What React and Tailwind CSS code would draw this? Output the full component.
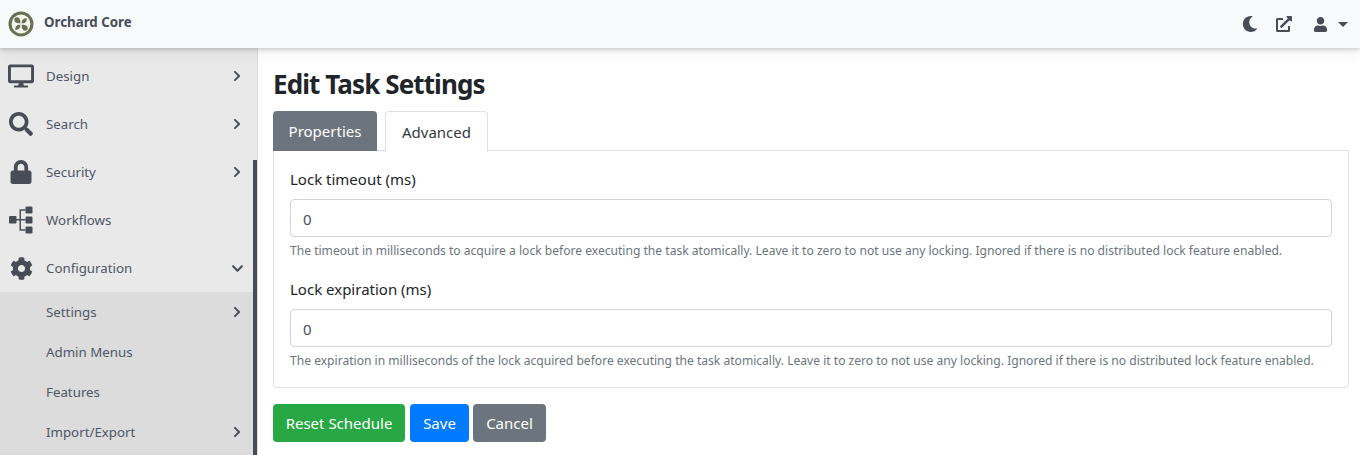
import React from "react";
import { FaDesktop, FaSearch, FaLock, FaCog, FaMoon, FaExternalLinkAlt, FaUser, FaChevronRight, FaChevronDown } from "react-icons/fa";

const Logo = () => (
  <svg width="26" height="26" viewBox="0 0 26 26" className="shrink-0">
    <circle cx="13" cy="13" r="12.5" fill="#6b6f53" />
    <circle cx="13" cy="13" r="9.400" fill="#f4f5ef" />
    <path d="M12.300 12.300C9 12.600 6.300 11.500 6.300 8.800C6.300 7.200 7.200 6.300 8.800 6.300C11.500 6.300 12.600 9 12.300 12.300z" fill="#6b6f53" />
    <path d="M13.700 12.300C13.400 9.500 14.800 7 18.800 7.200C19 11 16.500 12.700 13.700 12.300z" fill="#6b6f53" />
    <path d="M13.700 13.700C16.500 13.400 19.700 14.500 19.700 17.200C19.700 18.800 18.800 19.700 17.200 19.700C14.500 19.700 13.400 16.500 13.700 13.700z" fill="#6b6f53" />
    <path d="M12.300 13.700C12.600 16.500 11 19 7.200 18.800C7 15 9.500 13.300 12.300 13.700z" fill="#6b6f53" />
  </svg>
);

const WorkflowIcon = () => (
  <svg width="24" height="28" viewBox="0 0 24 28" fill="#474c57">
    <rect x="0" y="10" width="7.500" height="7.500" rx="1.200" />
    <rect x="16.500" y="0.500" width="7" height="7" rx="1.200" />
    <rect x="16.500" y="10.500" width="7" height="7" rx="1.200" />
    <rect x="16.500" y="20.500" width="7" height="7" rx="1.200" />
    <path d="M7 13h9.500v1.500H7zM10.500 3.200h6v1.500H12v18.600h4.500v1.500h-6z" />
  </svg>
);

const Row = ({ icon, label, chevron, sub }) => (
  <div className={`flex items-center text-[13.300px] text-[#4f5665] ${sub ? "h-10" : "h-12"}`}>
    <div className="w-[46px] flex justify-center pr-[4px] shrink-0">{icon}</div>
    <span className="flex-1 pt-[2px]">{label}</span>
    {chevron === "right" && <FaChevronRight className="mr-[10px] text-[12px] text-[#474c57]" />}
    {chevron === "down" && <FaChevronDown className="mr-[9px] text-[13px] text-[#474c57]" />}
  </div>
);

const Field = ({ label, help }) => (
  <div className="mb-[17px] last:mb-0">
    <label className="block text-[15px] leading-6 mb-[8px] text-[#212529]">{label}</label>
    <div className="h-[38px] border border-[#ced4da] rounded-[4px] px-3 pt-[2px] flex items-center text-[15px] text-[#495057] bg-white">0</div>
    <p className="text-[12.080px] leading-[18px] mt-[5px] text-[#6c757d] whitespace-nowrap">{help}</p>
  </div>
);

export default function App() {
  return (
    <div className="w-[1360px] h-[455px] overflow-hidden relative bg-white text-[#212529]" style={{ fontFamily: '"Noto Sans", "Open Sans", sans-serif' }}>
      <header className="h-12 bg-[#f8f9fa] flex items-center pl-2 pr-[12px] relative z-10 shadow-[0_2px_4px_rgba(0,0,0,0.15),0_4px_16px_rgba(0,0,0,0.07)]">
        <Logo />
        <span className="ml-[10px] pb-[2px] font-bold text-[13.300px] text-[#474c57]">Orchard Core</span>
        <div className="ml-auto flex items-center text-[#474c57]">
          <FaMoon className="text-[16px]" />
          <FaExternalLinkAlt className="text-[16px] ml-[18px]" />
          <FaUser className="text-[15px] ml-[21px]" />
          <span className="ml-[10px] w-0 h-0 border-x-[5px] border-x-transparent border-t-[5px] border-t-[#474c57]" />
        </div>
      </header>
      <div className="flex h-[407px]">
        <aside className="w-[258px] shrink-0 bg-[#e9e9e9] pt-1 relative overflow-hidden flex border-r border-[#dddddd]">
          <div className="flex-1 flex flex-col mr-[4px]">
            <Row icon={<FaDesktop className="text-[26px] text-[#474c57]" />} label="Design" chevron="right" />
            <Row icon={<FaSearch className="text-[24px] text-[#474c57]" />} label="Search" chevron="right" />
            <Row icon={<FaLock className="text-[24px] text-[#474c57]" />} label="Security" chevron="right" />
            <Row icon={<WorkflowIcon />} label="Workflows" />
            <Row icon={<FaCog className="text-[23px] text-[#474c57]" />} label="Configuration" chevron="down" />
            <div className="bg-[#dcdcdc] flex-1">
              <Row sub label="Settings" chevron="right" />
              <Row sub label="Admin Menus" />
              <Row sub label="Features" />
              <Row sub label="Import/Export" chevron="right" />
            </div>
          </div>
          <div className="absolute -right-px top-[112px] bottom-0 w-[5px] bg-[#474c57]" />
        </aside>
        <main className="flex-1 pl-[15px] pr-[11px] pt-[16px]">
          <h1 className="text-[26px] font-bold leading-[40px] tracking-[-0.9px] mb-[7px]">Edit Task Settings</h1>
          <div className="flex h-10 relative z-[1]">
            <div className="w-[104px] h-10 bg-[#6c757d] text-white rounded-t-[4px] flex items-center justify-center text-[15px]">Properties</div>
            <div className="ml-2 w-[103px] h-[41px] bg-white border border-[#dee2e6] border-b-0 rounded-t-[4px] flex items-center justify-center text-[15px] text-[#343a40]">Advanced</div>
          </div>
          <section className="-mt-px border border-[#dee2e6] rounded-b-[4px] pt-[16px] px-[16px] h-[238px]">
            <Field label="Lock timeout (ms)" help="The timeout in milliseconds to acquire a lock before executing the task atomically. Leave it to zero to not use any locking. Ignored if there is no distributed lock feature enabled." />
            <Field label="Lock expiration (ms)" help="The expiration in milliseconds of the lock acquired before executing the task atomically. Leave it to zero to not use any locking. Ignored if there is no distributed lock feature enabled." />
          </section>
          <div className="flex mt-4 text-white text-[15px]">
            <button className="h-[38px] w-[132px] rounded-[4px] bg-[#28a745]">Reset Schedule</button>
            <button className="h-[38px] w-[59px] ml-[5px] rounded-[4px] bg-[#007bff]">Save</button>
            <button className="h-[38px] w-[73px] ml-[4px] rounded-[4px] bg-[#6c757d]">Cancel</button>
          </div>
        </main>
      </div>
    </div>
  );
}
